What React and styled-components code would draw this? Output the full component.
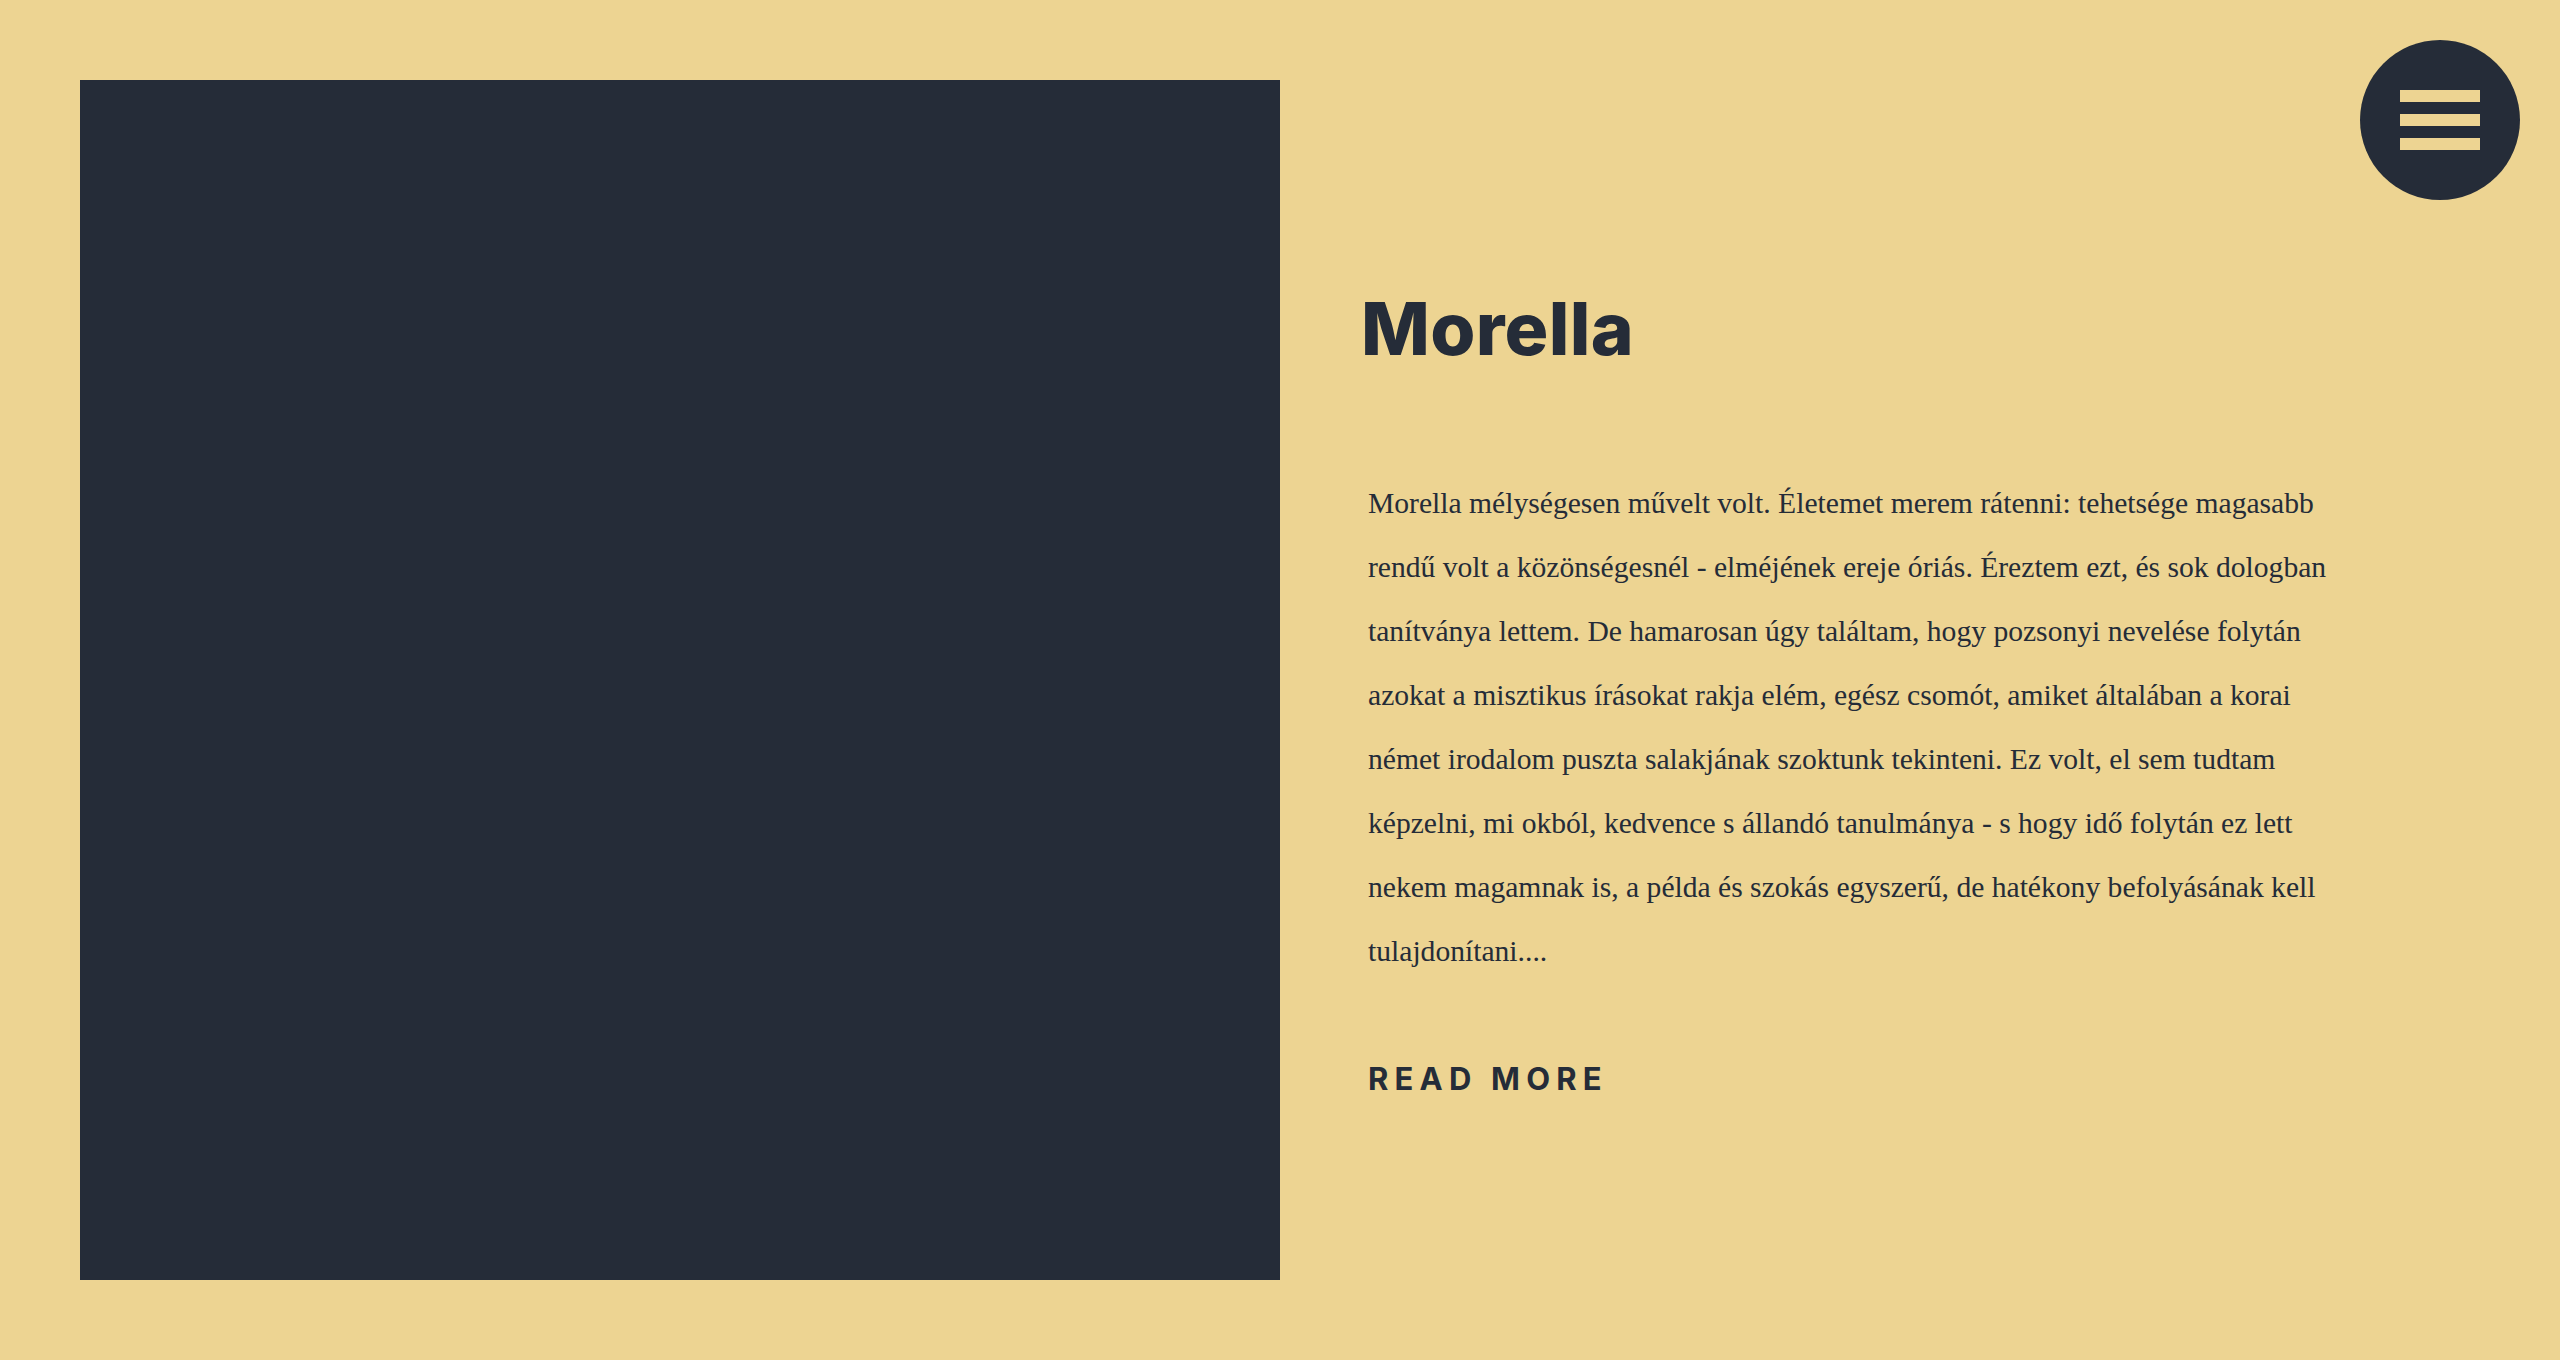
import React from 'react';
import styled, { createGlobalStyle } from 'styled-components';

const ink = '#252c38';
const sand = '#edd492';

const GlobalStyle = createGlobalStyle`
  html, body {
    margin: 0;
    padding: 0;
    background: ${sand};
  }
  * { box-sizing: border-box; }
`;

const Page = styled.main`
  display: flex;
  gap: 80px;
  padding: 80px;
  min-height: 1360px;
  background: ${sand};
`;

const Picture = styled.div`
  flex: 0 0 1200px;
  width: 1200px;
  height: 1200px;
  background: ${ink};
`;

const Content = styled.section`
  display: flex;
  flex-direction: column;
  align-items: flex-start;
  padding-top: 205px;
  width: 975px;
`;

const Title = styled.h1`
  margin: 0 0 99px 1px;
  font-family: Inter, "Open Sans", sans-serif;
  font-weight: 800;
  font-size: 73px;
  line-height: 87px;
  letter-spacing: 0.3px;
  color: ${ink};
`;

const Text = styled.p`
  margin: 0 0 77px 8px;
  font-family: "Liberation Serif", "DejaVu Serif", serif;
  font-size: 29.6px;
  line-height: 64px;
  color: ${ink};
`;

const ReadMore = styled.a`
  margin-left: 8px;
  font-family: Inter, "Open Sans", sans-serif;
  font-weight: 700;
  font-size: 31px;
  letter-spacing: 0.2em;
  text-transform: uppercase;
  color: ${ink};
  text-decoration: none;
  cursor: pointer;
`;

const MenuButton = styled.button`
  position: fixed;
  top: 40px;
  right: 40px;
  width: 160px;
  height: 160px;
  border: 0;
  border-radius: 50%;
  background: ${ink};
  display: flex;
  flex-direction: column;
  align-items: center;
  justify-content: center;
  gap: 12px;
  padding: 0;
  cursor: pointer;
`;

const Bar = styled.span`
  display: block;
  width: 80px;
  height: 12px;
  background: ${sand};
`;

export default function App() {
  return (
    <>
      <GlobalStyle />
      <Page>
        <Picture />
        <Content>
          <Title>Morella</Title>
          <Text>
            Morella mélységesen művelt volt. Életemet merem rátenni: tehetsége magasabb
            rendű volt a közönségesnél - elméjének ereje óriás. Éreztem ezt, és sok dologban
            tanítványa lettem. De hamarosan úgy találtam, hogy pozsonyi nevelése folytán
            azokat a misztikus írásokat rakja elém, egész csomót, amiket általában a korai
            német irodalom puszta salakjának szoktunk tekinteni. Ez volt, el sem tudtam
            képzelni, mi okból, kedvence s állandó tanulmánya - s hogy idő folytán ez lett
            nekem magamnak is, a példa és szokás egyszerű, de hatékony befolyásának kell
            tulajdonítani....
          </Text>
          <ReadMore>Read more</ReadMore>
        </Content>
      </Page>
      <MenuButton aria-label="Menu">
        <Bar />
        <Bar />
        <Bar />
      </MenuButton>
    </>
  );
}
